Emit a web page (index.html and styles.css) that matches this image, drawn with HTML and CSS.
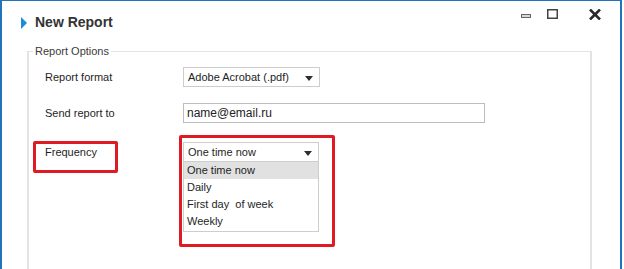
FILE: index.html
```html
<!DOCTYPE html>
<html>
<head>
<meta charset="utf-8">
<link rel="stylesheet" href="styles.css">
</head>
<body>
<div class="window">
  <div class="titlebar">
    <span class="tri"></span>
    <span class="title">New Report</span>
    <div class="controls">
      <svg class="ic-min" width="10" height="4" viewBox="0 0 10 4"><rect x="0.5" y="0.5" width="9" height="3" fill="#d8d8d8" stroke="#666" stroke-width="1"/></svg>
      <svg class="ic-max" width="11" height="10" viewBox="0 0 11 10"><rect x="0.75" y="0.75" width="9.5" height="8.5" fill="none" stroke="#444" stroke-width="1.5"/></svg>
      <svg class="ic-close" width="12" height="11" viewBox="0 0 12 11"><path d="M1 0.5 L11 10.5 M11 0.5 L1 10.5" stroke="#2b2b2b" stroke-width="2.6"/></svg>
    </div>
  </div>
  <fieldset class="group">
    <legend>Report Options</legend>
    <div class="row r1">
      <div class="label">Report format</div>
      <div class="select w137">Adobe Acrobat (.pdf)<span class="arrow"></span></div>
    </div>
    <div class="row r2">
      <div class="label">Send report to</div>
      <div class="input">name@email.ru</div>
    </div>
    <div class="row r3">
      <div class="label annotated">Frequency<span class="mark mark-label"></span></div>
      <div class="dd">
        <div class="select w136">One time now<span class="arrow"></span></div>
        <ul class="list">
          <li class="sel">One time now</li>
          <li>Daily</li>
          <li>First day &nbsp;of week</li>
          <li>Weekly</li>
        </ul>
        <span class="mark mark-dd"></span>
      </div>
    </div>
  </fieldset>
</div>
</body>
</html>
```

FILE: styles.css
```css
html, body {
  margin: 0;
  padding: 0;
  background: #fff;
}
body {
  width: 624px;
  height: 269px;
  overflow: hidden;
  font-family: "Liberation Sans", Arial, sans-serif;
  color: #1e1e1e;
}
.window {
  box-sizing: border-box;
  width: 622px;
  height: 269px;
  border-left: 2px solid #2272be;
  border-top: 1px solid #2272be;
  border-right: 2px solid #2272be;
  display: flex;
  flex-direction: column;
  background: #fff;
}
.titlebar {
  height: 42px;
  display: flex;
  align-items: center;
  padding-left: 19px;
  padding-right: 19px;
  flex: none;
}
.tri {
  width: 0;
  height: 0;
  border-left: 6px solid #1b8cd6;
  border-top: 6.5px solid transparent;
  border-bottom: 6.5px solid transparent;
  margin-right: 8px;
  margin-top: 1px;
}
.title {
  font-size: 14px;
  font-weight: bold;
  color: #333;
}
.controls {
  margin-left: auto;
  align-self: flex-start;
  padding-top: 8px;
  display: flex;
  align-items: flex-start;
}
.controls svg { display: block; }
.ic-min { margin-top: 5px; }
.ic-max { margin-left: 16px; }
.ic-close { margin-left: 31px; }

.group {
  flex: 1;
  margin: 2px 28px 0 25px;
  padding: 9px 0 0 4px;
  border-style: solid;
  border-color: #e1e4e7;
  border-width: 1px 2px 0 2px;
  min-width: 0;
}
.group legend {
  font-size: 11px;
  line-height: 13px;
  padding: 0 2px;
  color: #3a3a3a;
}
.row {
  display: flex;
  align-items: center;
  height: 20px;
  margin-left: 12px;
  font-size: 11px;
}
.r2 { margin-top: 16px; }
.r3 { margin-top: 19px; }
.label {
  width: 138px;
  flex: none;
  color: #1e1e1e;
}
.annotated { position: relative; }
.select {
  box-sizing: border-box;
  height: 20px;
  border: 1px solid #cdcdcd;
  background: #fff;
  padding-left: 4px;
  display: flex;
  align-items: center;
  position: relative;
  font-size: 11px;
  color: #1e1e1e;
}
.w137 { width: 137px; }
.w136 { width: 136px; }
.arrow {
  position: absolute;
  right: 6px;
  top: 8px;
  width: 0;
  height: 0;
  border-top: 5px solid #2e2e2e;
  border-left: 4.5px solid transparent;
  border-right: 4.5px solid transparent;
}
.input {
  box-sizing: border-box;
  width: 302px;
  height: 20px;
  border: 1px solid #bdbdbd;
  padding-left: 3px;
  display: flex;
  align-items: center;
  font-size: 12px;
  color: #222;
}
.dd {
  position: relative;
  width: 136px;
  height: 20px;
}
.list {
  position: absolute;
  left: 0;
  top: 20px;
  box-sizing: border-box;
  width: 136px;
  margin: 0;
  padding: 0 0 1px;
  list-style: none;
  border: 1px solid #cdcdcd;
  border-top: none;
  background: #fff;
}
.list li {
  height: 17px;
  line-height: 17px;
  padding-left: 3px;
  font-size: 11px;
  color: #1e1e1e;
  white-space: nowrap;
}
.list li.sel { background: #e1e1e1; }
.mark {
  position: absolute;
  box-sizing: border-box;
  border: 3px solid #df1a22;
  border-radius: 2px;
  pointer-events: none;
}
.mark-label {
  left: -12px;
  top: -5px;
  width: 85px;
  height: 32px;
}
.mark-dd {
  left: -4px;
  top: -7px;
  width: 156px;
  height: 112px;
}
```
